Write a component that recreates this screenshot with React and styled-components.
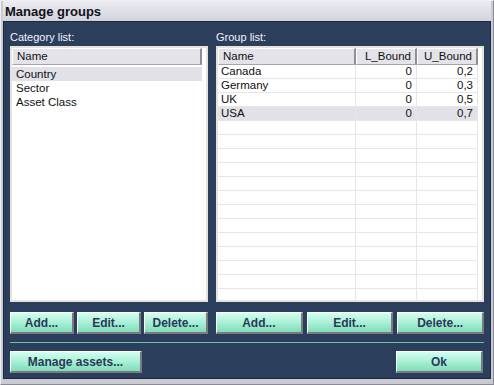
import React from "react";
import styled, { createGlobalStyle } from "styled-components";

const GlobalStyle = createGlobalStyle`
  html, body {
    margin: 0;
    padding: 0;
    background: #d4d4dc;
  }
  * {
    box-sizing: border-box;
  }
`;

const categories = ["Country", "Sector", "Asset Class"];

const groups = [
  { name: "Canada", low: "0", high: "0,2" },
  { name: "Germany", low: "0", high: "0,3" },
  { name: "UK", low: "0", high: "0,5" },
  { name: "USA", low: "0", high: "0,7" },
];

const EMPTY_ROWS = 13;

export default function App() {
  return (
    <>
      <GlobalStyle />
      <Frame>
        <TitleBar>Manage groups</TitleBar>
        <Body>
          <Columns>
            <Column>
              <Label>Category list:</Label>
              <ListBox>
                <HeaderRow>
                  <HeaderCell $grow>Name</HeaderCell>
                </HeaderRow>
                <PlainList>
                  {categories.map((c, i) => (
                    <PlainRow key={c} $selected={i === 0}>
                      {c}
                    </PlainRow>
                  ))}
                </PlainList>
              </ListBox>
              <ButtonRow>
                <Button>Add...</Button>
                <Button>Edit...</Button>
                <Button>Delete...</Button>
              </ButtonRow>
            </Column>
            <Column $wide>
              <Label>Group list:</Label>
              <ListBox>
                <HeaderRow>
                  <HeaderCell $grow>Name</HeaderCell>
                  <HeaderCell $width={61} $right>
                    L_Bound
                  </HeaderCell>
                  <HeaderCell $width={61} $right>
                    U_Bound
                  </HeaderCell>
                </HeaderRow>
                {groups.map((g, i) => (
                  <GridRow key={g.name} $selected={i === 3}>
                    <GridCell $grow>{g.name}</GridCell>
                    <GridCell $width={61} $right>
                      {g.low}
                    </GridCell>
                    <GridCell $width={61} $right>
                      {g.high}
                    </GridCell>
                  </GridRow>
                ))}
                {Array.from({ length: EMPTY_ROWS }).map((_, i) => (
                  <GridRow key={"e" + i}>
                    <GridCell $grow />
                    <GridCell $width={61} />
                    <GridCell $width={61} />
                  </GridRow>
                ))}
              </ListBox>
              <ButtonRow $gap={4}>
                <Button>Add...</Button>
                <Button>Edit...</Button>
                <Button>Delete...</Button>
              </ButtonRow>
            </Column>
          </Columns>
          <Separator />
          <Footer>
            <Button $width={132}>Manage assets...</Button>
            <Button $width={87}>Ok</Button>
          </Footer>
        </Body>
      </Frame>
    </>
  );
}

const Frame = styled.div`
  width: 494px;
  height: 385px;
  display: flex;
  flex-direction: column;
  background: #c9cad2;
  border-left: 1px solid #f0f0f4;
  border-top: 1px solid #f0f0f4;
  border-right: 1px solid #8a8a96;
  border-bottom: 1px solid #8a8a96;
  padding: 0 2px 5px 2px;
`;

const TitleBar = styled.div`
  height: 21px;
  display: flex;
  align-items: center;
  padding-left: 2px;
  background: linear-gradient(#ececf2, #d2d3dc);
  font-family: "Liberation Sans", Arial, sans-serif;
  font-weight: bold;
  font-size: 13px;
  color: #101018;
`;

const Body = styled.div`
  flex: 1;
  display: flex;
  flex-direction: column;
  background: #2b3e5b;
  border: 1px solid #1c2a40;
  padding: 6px 6px 5px 6px;
`;

const Columns = styled.div`
  display: flex;
  gap: 8px;
`;

const Column = styled.div`
  width: ${(p) => (p.$wide ? "268px" : "198px")};
  display: flex;
  flex-direction: column;
`;

const Label = styled.div`
  height: 18px;
  padding-top: 3px;
  font-family: "Liberation Sans", Arial, sans-serif;
  font-size: 11px;
  color: #f2f4f8;
`;

const ListBox = styled.div`
  height: 256px;
  background: #ffffff;
  border: 2px solid #e6e3da;
  padding-right: 4px;
  overflow: hidden;
  display: flex;
  flex-direction: column;
`;

const HeaderRow = styled.div`
  display: flex;
  height: 17px;
  flex-shrink: 0;
`;

const HeaderCell = styled.div`
  ${(p) => (p.$grow ? "flex: 1;" : `width: ${p.$width}px;`)}
  background: #e4e3e9;
  border-top: 1px solid #ffffff;
  border-left: 1px solid #ffffff;
  border-right: 2px solid #8e8e94;
  border-bottom: 1px solid #a4a4aa;
  font-family: "Liberation Sans", Arial, sans-serif;
  font-size: 11.5px;
  color: #101010;
  line-height: 15px;
  padding: 0 4px;
  text-align: ${(p) => (p.$right ? "right" : "left")};
`;

const PlainList = styled.div`
  padding-top: 2px;
`;

const PlainRow = styled.div`
  height: 14px;
  line-height: 14px;
  padding-left: 4px;
  font-family: "Liberation Sans", Arial, sans-serif;
  font-size: 11.5px;
  color: #101010;
  background: ${(p) => (p.$selected ? "#e2e1e8" : "transparent")};
`;

const GridRow = styled.div`
  display: flex;
  height: 14px;
  flex-shrink: 0;
  border-bottom: 1px solid #e6e6e6;
  background: ${(p) => (p.$selected ? "#e2e1e8" : "transparent")};
`;

const GridCell = styled.div`
  ${(p) => (p.$grow ? "flex: 1;" : `width: ${p.$width}px;`)}
  border-right: 1px solid #e6e6e6;
  font-family: "Liberation Sans", Arial, sans-serif;
  font-size: 11.5px;
  color: #101010;
  line-height: 13px;
  padding: 0 4px 0 3px;
  text-align: ${(p) => (p.$right ? "right" : "left")};
`;

const ButtonRow = styled.div`
  display: flex;
  gap: ${(p) => p.$gap || 3}px;
  margin-top: 10px;
`;

const Button = styled.button`
  ${(p) => (p.$width ? `width: ${p.$width}px;` : "flex: 1;")}
  height: 22px;
  padding: 0;
  background: linear-gradient(#d4fdf0, #a8f0d6 50%, #80dcb8);
  border-top: 1px solid #ffffff;
  border-left: 1px solid #ffffff;
  border-right: 2px solid #7a7a80;
  border-bottom: 2px solid #7a7a80;
  font-family: "Liberation Sans", Arial, sans-serif;
  font-weight: bold;
  font-size: 12px;
  color: #2a3858;
  cursor: pointer;
`;

const Separator = styled.div`
  height: 1px;
  margin: 8px 0 8px 0;
  background: #6cc4aa;
`;

const Footer = styled.div`
  display: flex;
  justify-content: space-between;
  margin-right: 1px;
`;
